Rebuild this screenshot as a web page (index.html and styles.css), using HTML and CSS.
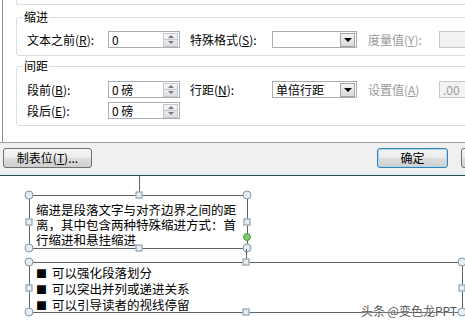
FILE: index.html
```html
<!DOCTYPE html>
<html>
<head>
    <title>段落 - 缩进和间距</title>
    <link rel="stylesheet" href="styles.css">
</head>
<body>

    <div class="dialog-body">
        <div class="prev-group"></div>

        <fieldset class="group">
            <legend>缩进</legend>
            <div class="row">
                <span class="lbl">文本之前(<u>R</u>):</span>
                <div class="spin-box">
                    <span class="val">0</span>
                    <div class="spinner"><i class="up"></i><i class="down"></i></div>
                </div>
                <span class="lbl lbl-mid">特殊格式(<u>S</u>):</span>
                <div class="select">
                    <span class="val"></span>
                    <div class="drop"><i></i></div>
                </div>
                <span class="lbl lbl-gray">度量值(<u>Y</u>):</span>
                <div class="gray-box"></div>
            </div>
        </fieldset>

        <fieldset class="group group-spacing">
            <legend>间距</legend>
            <div class="row">
                <span class="lbl">段前(<u>B</u>):</span>
                <div class="spin-box">
                    <span class="val">0 磅</span>
                    <div class="spinner"><i class="up"></i><i class="down"></i></div>
                </div>
                <span class="lbl lbl-mid">行距(<u>N</u>):</span>
                <div class="select">
                    <span class="val">单倍行距</span>
                    <div class="drop"><i></i></div>
                </div>
                <span class="lbl lbl-gray">设置值(<u>A</u>)</span>
                <div class="gray-box">.00</div>
            </div>
            <div class="row">
                <span class="lbl">段后(<u>E</u>):</span>
                <div class="spin-box">
                    <span class="val">0 磅</span>
                    <div class="spinner"><i class="up"></i><i class="down"></i></div>
                </div>
            </div>
        </fieldset>
    </div>

    <div class="button-bar">
        <div class="btn btn-tabs">制表位(<u>T</u>)...</div>
        <div class="btn btn-ok">确定</div>
        <div class="btn btn-cancel"></div>
    </div>
    <div class="frame-edge"></div>

    <div class="slide">
        <div class="textbox box-one">
            <span class="stem"></span>
            <span class="handle circle tl"></span>
            <span class="handle circle tr"></span>
            <span class="handle circle bl"></span>
            <span class="handle circle br"></span>
            <span class="handle square tm"></span>
            <span class="handle square bm"></span>
            <span class="handle square ml"></span>
            <span class="handle square mr"></span>
            <span class="handle adjust"></span>
            缩进是段落文字与对齐边界之间的距<br>
            离，其中包含两种特殊缩进方式：首<br>
            行缩进和悬挂缩进
        </div>

        <div class="textbox box-two">
            <span class="stem short"></span>
            <span class="handle circle tl"></span>
            <span class="handle circle tr"></span>
            <span class="handle circle bl"></span>
            <span class="handle circle br"></span>
            <span class="handle square tm"></span>
            <span class="handle square bm"></span>
            <span class="handle square ml"></span>
            <span class="handle square mr"></span>
            <div class="bullet"><b>■</b>可以强化段落划分</div>
            <div class="bullet"><b>■</b>可以突出并列或递进关系</div>
            <div class="bullet"><b>■</b>可以引导读者的视线停留</div>
        </div>

        <div class="watermark">头条 @变色龙PPT</div>
    </div>

</body>
</html>
```

FILE: styles.css
```css
html, body {
    margin: 0;
    padding: 0;
    overflow: hidden;
    background: #fff;
}

body {
    width: 465px;
    height: 328px;
    font-family: "Noto Sans CJK SC", "Noto Sans", sans-serif;
    font-size: 12px;
    color: #000;
}

/* dialog content */

.dialog-body {
    width: 540px;
    margin-left: 2px;
    border-left: 1px solid #8e8e8e;
    padding-bottom: 16px;
}

.prev-group {
    height: 4px;
    margin-left: 13px;
    border: 1px solid #d5dfe5;
    border-top: none;
    border-radius: 0 0 0 3px;
}

.group {
    margin: 4px 0 0 13px;
    padding: 6px 0 7px 6px;
    border: 1px solid #d5dfe5;
    border-radius: 3px;
    min-inline-size: 0;
}

.group legend {
    padding: 0 1px;
    height: 16px;
    line-height: 16px;
}

.group-spacing {
    margin-top: 2px;
    padding-top: 7px;
    padding-bottom: 6px;
}

.row {
    display: flex;
    align-items: center;
    height: 17px;
    padding-left: 4px;
}

.row + .row {
    margin-top: 4px;
}

.lbl {
    flex: none;
    width: 81px;
    line-height: 17px;
    white-space: nowrap;
}

.lbl-mid {
    width: 82px;
    margin-left: 10px;
}

.lbl-gray {
    width: 71px;
    margin-left: 11px;
    color: #9a9a9a;
}

.spin-box, .select, .gray-box {
    flex: none;
    box-sizing: border-box;
    height: 17px;
    border: 1px solid #a9acb1;
    background: #fff;
    display: flex;
    align-items: center;
    line-height: 15px;
}

.spin-box {
    width: 72px;
}

.val {
    flex: 1;
    padding-left: 3px;
    white-space: nowrap;
}

.spinner {
    width: 15px;
    height: 14px;
    margin-right: 1px;
    display: flex;
    flex-direction: column;
    border: 1px solid #c4c8cc;
    box-sizing: border-box;
    background: linear-gradient(#f6f6f6, #dedede);
}

.spinner i {
    flex: 1;
    display: flex;
    align-items: center;
    justify-content: center;
}

.spinner i + i {
    border-top: 1px solid #c4c8cc;
}

.spinner .up::before {
    content: "";
    border-left: 3px solid transparent;
    border-right: 3px solid transparent;
    border-bottom: 3px solid #6d7c88;
}

.spinner .down::before {
    content: "";
    border-left: 3px solid transparent;
    border-right: 3px solid transparent;
    border-top: 3px solid #6d7c88;
}

.select {
    width: 85px;
}

.drop {
    width: 15px;
    height: 14px;
    margin-right: 1px;
    box-sizing: border-box;
    border: 1px solid #9ea6ad;
    background: linear-gradient(#f4f4f4, #d9d9d9);
    display: flex;
    align-items: center;
    justify-content: center;
}

.drop i {
    border-left: 4px solid transparent;
    border-right: 4px solid transparent;
    border-top: 4px solid #000;
}

.gray-box {
    width: 40px;
    background: #f2f2f2;
    border-color: #c9c9c9;
    color: #9a9a9a;
    padding-left: 3px;
}

/* button strip */

.button-bar {
    width: 540px;
    display: flex;
    padding: 5px 0 4px 3px;
    background: #f0f0f0;
    border-top: 1px solid #a0a0a0;
}

.btn {
    flex: none;
    box-sizing: border-box;
    height: 20px;
    line-height: 18px;
    text-align: center;
    border: 1px solid #707070;
    border-radius: 3px;
    background: linear-gradient(#f4f4f4 0%, #ebebeb 48%, #dddddd 52%, #cfcfcf 100%);
}

.btn-tabs {
    width: 89px;
}

.btn-ok {
    width: 71px;
    margin-left: 285px;
    border-color: #3c7fb1;
    box-shadow: inset 0 0 0 1px #a6d9f4;
}

.btn-cancel {
    width: 71px;
    margin-left: 13px;
}

.frame-edge {
    height: 3px;
    background: #e3eef4;
    border-bottom: 1px solid #2b4b55;
}

/* slide area */

.slide {
    position: relative;
    height: 151px;
    padding-top: 19px;
    box-sizing: border-box;
}

.textbox {
    position: relative;
    box-sizing: border-box;
    margin-left: 29px;
    border: 1px solid #5e6266;
    font-size: 12.5px;
    line-height: 15px;
    white-space: nowrap;
}

.box-one {
    width: 219px;
    height: 54px;
    padding: 6px 0 0 6px;
}

.box-two {
    width: 434px;
    height: 51px;
    margin-top: 13px;
    padding: 2px 0 0 6px;
}

.bullet b {
    display: inline-block;
    width: 16px;
    font-size: 11px;
    font-weight: normal;
}

.stem {
    position: absolute;
    left: 50%;
    top: -20px;
    width: 1px;
    height: 19px;
    background: #5e6266;
}

.stem.short {
    top: -14px;
    height: 13px;
}

.handle {
    position: absolute;
    box-sizing: border-box;
    border: 1px solid #8397a4;
    background: #e6edf2;
    transform: translate(-50%, -50%);
}

.circle {
    width: 9px;
    height: 9px;
    border-radius: 50%;
}

.square {
    width: 7px;
    height: 7px;
}

.tl { left: -1px; top: -1px; }
.tr { left: 100%; top: -1px; }
.bl { left: -1px; top: 100%; }
.br { left: 100%; top: 100%; }
.tm { left: 50%; top: -1px; }
.bm { left: 50%; top: 100%; }
.ml { left: -1px; top: 50%; }
.mr { left: 100%; top: 50%; }

.adjust {
    left: 100%;
    top: 78%;
    width: 8px;
    height: 8px;
    border-radius: 50%;
    border-color: #4e9a3e;
    background: #82c96f;
}

.watermark {
    position: absolute;
    right: 8px;
    top: 127px;
    font-size: 12px;
    line-height: 16px;
    color: #585858;
    text-shadow: 0 0 2px #fff;
}
```
